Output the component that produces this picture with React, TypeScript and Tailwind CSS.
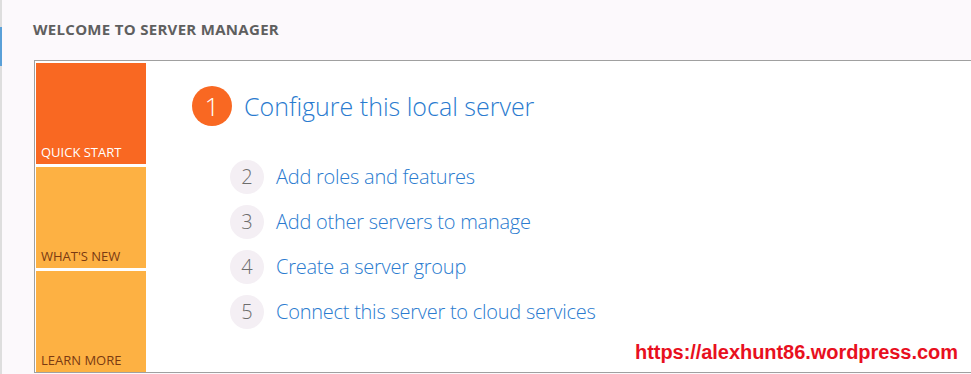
export default function App() {
  const steps = [
    { n: 2, label: 'Add roles and features' },
    { n: 3, label: 'Add other servers to manage' },
    { n: 4, label: 'Create a server group' },
    { n: 5, label: 'Connect this server to cloud services' },
  ];

  const tiles = [
    { label: 'QUICK START', bg: 'bg-[#f96822]', text: 'text-white' },
    { label: "WHAT'S NEW", bg: 'bg-[#fdb143]', text: 'text-[#7a3a12]' },
    { label: 'LEARN MORE', bg: 'bg-[#fdb143]', text: 'text-[#7a3a12]' },
  ];

  return (
    <div className="relative flex h-[374px] w-[971px] overflow-hidden bg-[#fcf9fc] font-['Open_Sans','Noto_Sans',sans-serif]">
      {/* window edge */}
      <div className="flex w-[2px] flex-col bg-[#dedede]">
        <div className="h-[27px]" />
        <div className="h-[39px] bg-[#5aa0d8]" />
      </div>

      <div className="flex flex-1 flex-col">
        <div className="pl-[31px] pt-[19px] text-[15px] font-bold leading-[20px] tracking-[0.3px] text-[#5f5f5f]">
          WELCOME TO SERVER MANAGER
        </div>

        {/* panel */}
        <div className="ml-[32px] mt-[21px] flex h-[313px] border-y border-l border-[#a0a0a0] bg-white">
          <div className="flex w-[111px] flex-col gap-[3px] pl-[1px] pt-[2px]">
            {tiles.map((t) => (
              <div
                key={t.label}
                className={`flex h-[101px] items-end px-[5px] pb-[4px] ${t.bg}`}
              >
                <span className={`text-[13px] leading-[16px] ${t.text}`}>
                  {t.label}
                </span>
              </div>
            ))}
          </div>

          <div className="flex flex-1 flex-col pt-[25px]">
            <div className="ml-[46px] flex items-center gap-[12px]">
              <div className="flex h-[40px] w-[40px] items-center justify-center rounded-full bg-[#f96822] text-[26px] font-light leading-none text-white">
                1
              </div>
              <span className="text-[25px] font-light leading-[40px] text-[#2a7bcf]">
                Configure this local server
              </span>
            </div>

            <div className="ml-[84px] mt-[34px] flex flex-col gap-[11px]">
              {steps.map((s) => (
                <div key={s.n} className="flex items-center gap-[12px]">
                  <div className="flex h-[34px] w-[34px] items-center justify-center rounded-full bg-[#f4eff4] text-[20px] font-light leading-none text-[#6d6d6d]">
                    {s.n}
                  </div>
                  <span className="text-[20px] font-light leading-[34px] tracking-[-0.25px] text-[#2a7bcf]">
                    {s.label}
                  </span>
                </div>
              ))}
            </div>
          </div>
        </div>
      </div>

      {/* watermark */}
      <div className="absolute left-[635px] top-[341px] font-['Liberation_Sans',sans-serif] text-[20px] font-bold leading-[22px] tracking-[-0.05px] text-[#e8101e]">
        https://alexhunt86.wordpress.com
      </div>
    </div>
  );
}
